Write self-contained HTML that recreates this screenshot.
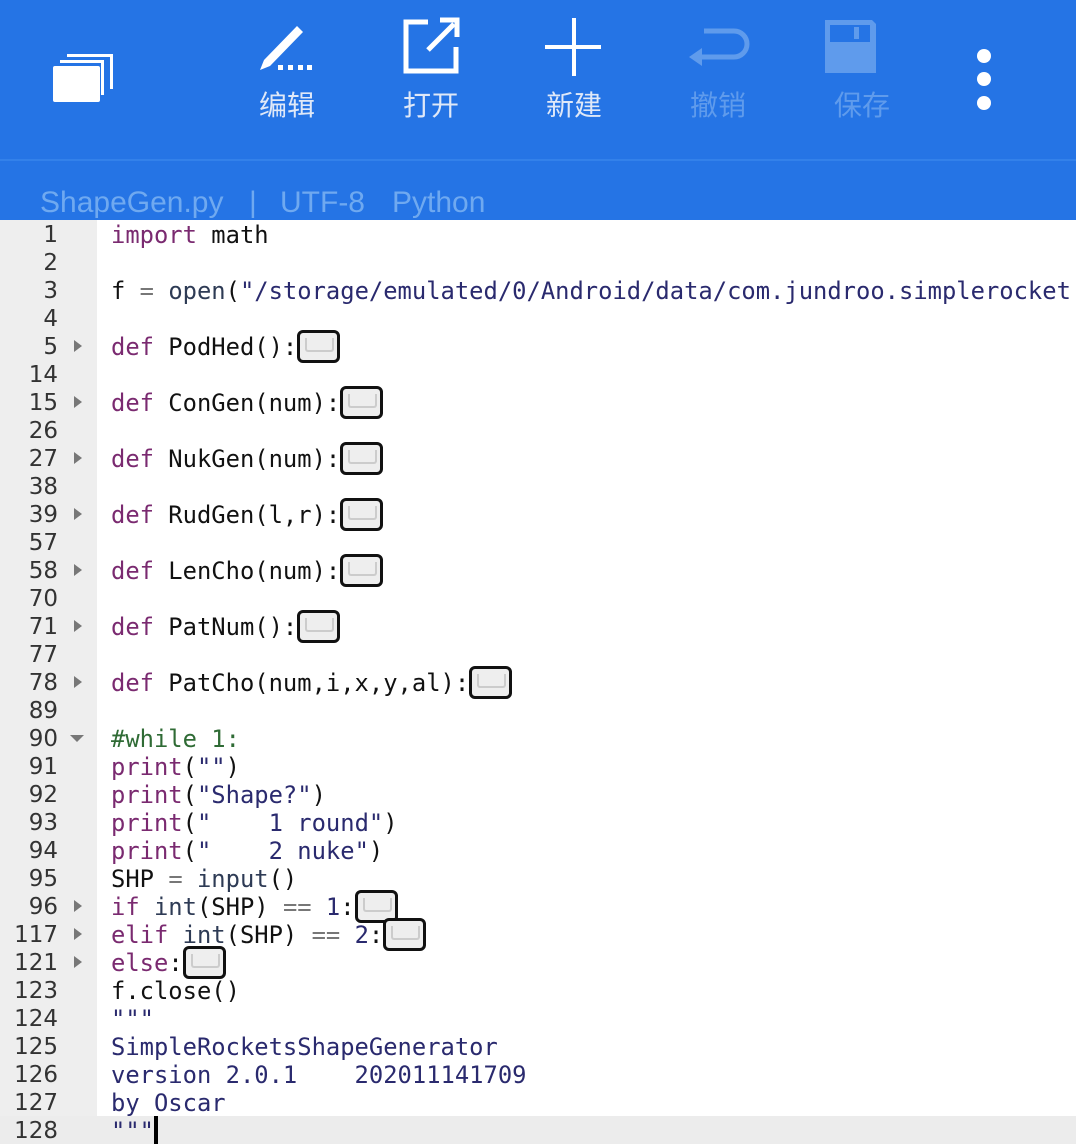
<!DOCTYPE html>
<html><head><meta charset="utf-8"><style>
html,body{margin:0;padding:0;width:1076px;height:1144px;overflow:hidden;background:#fff}
#top{position:absolute;left:0;top:0;width:1076px;height:220px;background:#2574e5}
#sep{position:absolute;left:0;top:159px;width:1076px;height:2px;background:#3381ea}
.lbl{position:absolute;top:84px;font:28px "Liberation Sans","Noto Sans CJK SC",sans-serif;color:#dfe8f8;width:100px;text-align:center}
.dim{color:#5f9bec}
.st{position:absolute;top:188px;font:30px "Liberation Sans",sans-serif;color:#6fa9f0;white-space:pre;line-height:30px}
#gut{position:absolute;left:0;top:220px;width:97px;height:924px;background:#eeeeee}
#hl{position:absolute;left:0;top:1116px;width:1076px;height:28px;background:#ececec}
.row{position:absolute;left:0;height:28px;width:1076px}
.n{position:absolute;right:1018px;top:1px;font:23px "DejaVu Sans",sans-serif;color:#333;line-height:28px}
.a{position:absolute;left:74px;top:8px;width:0;height:0;border-top:6px solid transparent;border-bottom:6px solid transparent;border-left:8px solid #777}
.d{position:absolute;left:70px;top:11px;width:0;height:0;border-left:7px solid transparent;border-right:7px solid transparent;border-top:7px solid #777}
.c{position:absolute;left:111px;top:1px;font:23.8px "DejaVu Sans Mono",monospace;line-height:28px;white-space:pre;color:#111}
.k{color:#7a2a70}.s{color:#2a2a6e}.b{color:#2e3b55}.g{color:#777}.cm{color:#2f6b35}
.f{display:inline-block;vertical-align:middle;width:37px;height:27px;border:3px solid #111;border-radius:6px;background:#eee;margin-top:-4px;position:relative}
.f:after{content:"";position:absolute;left:5px;top:5px;width:25px;height:12px;border:2px solid #ccc;border-top:none;border-radius:0 0 3px 3px}
#cur{position:absolute;left:154px;top:1116px;width:4px;height:28px;background:#000}
</style></head><body>
<div id="top"></div><div id="sep"></div>
<svg style="position:absolute;left:0;top:0" width="1076" height="160">
<g fill="#fff">
<rect x="53" y="66" width="47" height="36" rx="2"/>
<path d="M60 60h44v35h-3v-32h-41z"/><path d="M67 54h46v35h-3v-32h-43z"/>
</g>
<path d="M297 26l6 6-33 34-10 4 4-10z" fill="#fff"/>
<g fill="#fff"><rect x="278" y="65" width="5" height="5"/><rect x="288" y="65" width="5" height="5"/><rect x="298" y="65" width="5" height="5"/><rect x="307" y="65" width="5" height="5"/></g>
<path d="M428 22h-22v49h50v-24" stroke="#fff" stroke-width="5" fill="none"/>
<path d="M428 50l26-26M440 20h17v17" stroke="#fff" stroke-width="5" fill="none"/>
<path d="M545 47h56M574 18v58" stroke="#fff" stroke-width="4"/>
<path d="M700 57h34a13 13 0 0 0 0-26h-30" stroke="#5f9bec" stroke-width="5" fill="none"/>
<path d="M689 57l13-9v18z" fill="#5f9bec"/>
<path d="M825 20h47l4 4v49h-51z" fill="#5f9bec"/><rect x="830" y="25" width="40" height="17" fill="#2574e5"/><rect x="854" y="27" width="5" height="12" fill="#5f9bec"/>
<g fill="#fff"><circle cx="984" cy="56" r="7"/><circle cx="984" cy="79" r="7"/><circle cx="984" cy="103" r="7"/></g>
</svg>
<div class="lbl" style="left:237px">编辑</div>
<div class="lbl" style="left:381px">打开</div>
<div class="lbl" style="left:524px">新建</div>
<div class="lbl dim" style="left:668px">撤销</div>
<div class="lbl dim" style="left:812px">保存</div>
<div class="st" style="left:40px">ShapeGen.py</div>
<div class="st" style="left:249px">|</div>
<div class="st" style="left:280px">UTF-8</div>
<div class="st" style="left:392px">Python</div>
<div id="gut"></div><div id="hl"></div>

<div class="row" style="top:220px"><span class="n">1</span><span class="c"><span class="k">import</span> math</span></div>
<div class="row" style="top:248px"><span class="n">2</span></div>
<div class="row" style="top:276px"><span class="n">3</span><span class="c">f <span class="g">=</span> <span class="b">open</span>(<span class="s">"/storage/emulated/0/Android/data/com.jundroo.simplerocket</span></span></div>
<div class="row" style="top:304px"><span class="n">4</span></div>
<div class="row" style="top:332px"><span class="n">5</span><i class="a"></i><span class="c"><span class="k">def</span> PodHed():<span class="f"></span></span></div>
<div class="row" style="top:360px"><span class="n">14</span></div>
<div class="row" style="top:388px"><span class="n">15</span><i class="a"></i><span class="c"><span class="k">def</span> ConGen(num):<span class="f"></span></span></div>
<div class="row" style="top:416px"><span class="n">26</span></div>
<div class="row" style="top:444px"><span class="n">27</span><i class="a"></i><span class="c"><span class="k">def</span> NukGen(num):<span class="f"></span></span></div>
<div class="row" style="top:472px"><span class="n">38</span></div>
<div class="row" style="top:500px"><span class="n">39</span><i class="a"></i><span class="c"><span class="k">def</span> RudGen(l,r):<span class="f"></span></span></div>
<div class="row" style="top:528px"><span class="n">57</span></div>
<div class="row" style="top:556px"><span class="n">58</span><i class="a"></i><span class="c"><span class="k">def</span> LenCho(num):<span class="f"></span></span></div>
<div class="row" style="top:584px"><span class="n">70</span></div>
<div class="row" style="top:612px"><span class="n">71</span><i class="a"></i><span class="c"><span class="k">def</span> PatNum():<span class="f"></span></span></div>
<div class="row" style="top:640px"><span class="n">77</span></div>
<div class="row" style="top:668px"><span class="n">78</span><i class="a"></i><span class="c"><span class="k">def</span> PatCho(num,i,x,y,al):<span class="f"></span></span></div>
<div class="row" style="top:696px"><span class="n">89</span></div>
<div class="row" style="top:724px"><span class="n">90</span><i class="d"></i><span class="c cm">#while 1:</span></div>
<div class="row" style="top:752px"><span class="n">91</span><span class="c"><span class="k">print</span>(<span class="s">""</span>)</span></div>
<div class="row" style="top:780px"><span class="n">92</span><span class="c"><span class="k">print</span>(<span class="s">"Shape?"</span>)</span></div>
<div class="row" style="top:808px"><span class="n">93</span><span class="c"><span class="k">print</span>(<span class="s">"    1 round"</span>)</span></div>
<div class="row" style="top:836px"><span class="n">94</span><span class="c"><span class="k">print</span>(<span class="s">"    2 nuke"</span>)</span></div>
<div class="row" style="top:864px"><span class="n">95</span><span class="c">SHP <span class="g">=</span> <span class="b">input</span>()</span></div>
<div class="row" style="top:892px"><span class="n">96</span><i class="a"></i><span class="c"><span class="k">if</span> <span class="b">int</span>(SHP) <span class="g">==</span> <span class="s">1</span>:<span class="f"></span></span></div>
<div class="row" style="top:920px"><span class="n">117</span><i class="a"></i><span class="c"><span class="k">elif</span> <span class="b">int</span>(SHP) <span class="g">==</span> <span class="s">2</span>:<span class="f"></span></span></div>
<div class="row" style="top:948px"><span class="n">121</span><i class="a"></i><span class="c"><span class="k">else</span>:<span class="f"></span></span></div>
<div class="row" style="top:976px"><span class="n">123</span><span class="c">f.close()</span></div>
<div class="row" style="top:1004px"><span class="n">124</span><span class="c s">"""</span></div>
<div class="row" style="top:1032px"><span class="n">125</span><span class="c s">SimpleRocketsShapeGenerator</span></div>
<div class="row" style="top:1060px"><span class="n">126</span><span class="c s">version 2.0.1    202011141709</span></div>
<div class="row" style="top:1088px"><span class="n">127</span><span class="c s">by Oscar</span></div>
<div class="row" style="top:1116px"><span class="n">128</span><span class="c s">"""</span></div>
<div id="cur"></div>
</body></html>
